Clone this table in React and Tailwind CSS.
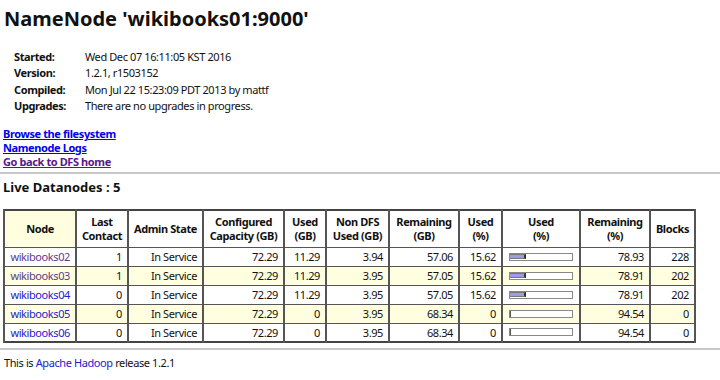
import React from "react";

const rows = [
  { node: "wikibooks02", visited: true, last: 1, cap: "72.29", used: "11.29", nondfs: "3.94", rem: "57.06", usedPct: "15.62", pct: 15.62, remPct: "78.93", blocks: 228 },
  { node: "wikibooks03", visited: true, last: 1, cap: "72.29", used: "11.29", nondfs: "3.95", rem: "57.05", usedPct: "15.62", pct: 15.62, remPct: "78.91", blocks: 202 },
  { node: "wikibooks04", visited: false, last: 0, cap: "72.29", used: "11.29", nondfs: "3.95", rem: "57.05", usedPct: "15.62", pct: 15.62, remPct: "78.91", blocks: 202 },
  { node: "wikibooks05", visited: false, last: 0, cap: "72.29", used: "0", nondfs: "3.95", rem: "68.34", usedPct: "0", pct: 0, remPct: "94.54", blocks: 0 },
  { node: "wikibooks06", visited: false, last: 0, cap: "72.29", used: "0", nondfs: "3.95", rem: "68.34", usedPct: "0", pct: 0, remPct: "94.54", blocks: 0 },
];

const info = [
  ["Started:", "Wed Dec 07 16:11:05 KST 2016"],
  ["Version:", "1.2.1, r1503152"],
  ["Compiled:", "Mon Jul 22 15:23:09 PDT 2013 by mattf"],
  ["Upgrades:", "There are no upgrades in progress."],
];

const th = "border-x-2 border-y border-[#555] font-bold text-center align-middle leading-[13.5px] px-[2px] whitespace-nowrap";
const td = "border-x-2 border-y border-[#555] text-right px-[5px] h-[19px] leading-[17px]";

// the bar image in the old Hadoop UI: blue used part, white remainder
function UsageBar({ pct }) {
  const w = Math.round(pct);
  return (
    <div className="mx-auto flex h-[8px] w-[64px] items-center border border-[#888] bg-white">
      {w > 0 && <div className="h-[5px] bg-[#9c9cec] border-y border-[#777] border-r-2 border-r-[#333]" style={{ width: w }} />}
      {w === 0 && <div className="h-[6px] w-[1px] bg-[#555]" />}
    </div>
  );
}

export default function App() {
  return (
    <div className="w-[720px] h-[380px] overflow-hidden bg-white text-[#111] font-['Noto_Sans',sans-serif] text-[11px] tracking-[-0.4px]">
      <h1 className="pl-[4px] pt-[6px] text-[20px] font-bold leading-[26px] tracking-normal">NameNode 'wikibooks01:9000'</h1>

      <table className="ml-[10px] mt-[17px] border-separate border-spacing-x-[4px]">
        <tbody>
          {info.map(([k, v]) => (
            <tr key={k}>
              <td className="font-bold w-[67px] leading-[16.3px]">{k}</td>
              <td className="leading-[16.3px]">{v}</td>
            </tr>
          ))}
        </tbody>
      </table>

      <div className="mt-[13px] pl-[3px] flex flex-col font-bold leading-[14px]">
        <a href="#" className="underline text-[#0000ee] w-fit">Browse the filesystem</a>
        <a href="#" className="underline text-[#0000ee] w-fit">Namenode Logs</a>
        <a href="#" className="underline text-[#551a8b] w-fit">Go back to DFS home</a>
      </div>

      <hr className="mt-[3px] border-t-2 border-[#c8c8c8]" />

      <h3 className="pl-[3px] mt-[5px] text-[13px] font-bold leading-[16px] tracking-normal">Live Datanodes : 5</h3>

      <table className="ml-[3px] mt-[14px] table-fixed border-collapse border-2 border-[#444] w-[691px]">
        <colgroup>
          <col className="w-[72px]" />
          <col className="w-[52px]" />
          <col className="w-[75px]" />
          <col className="w-[81px]" />
          <col className="w-[42px]" />
          <col className="w-[63px]" />
          <col className="w-[70px]" />
          <col className="w-[43px]" />
          <col className="w-[78px]" />
          <col className="w-[70px]" />
          <col className="w-[45px]" />
        </colgroup>
        <thead>
          <tr className="h-[37px]">
            <th className={th + " bg-[#ffffe0]"}>Node</th>
            <th className={th}>Last<br />Contact</th>
            <th className={th}>Admin State</th>
            <th className={th}>Configured<br />Capacity (GB)</th>
            <th className={th}>Used<br />(GB)</th>
            <th className={th}>Non DFS<br />Used (GB)</th>
            <th className={th}>Remaining<br />(GB)</th>
            <th className={th}>Used<br />(%)</th>
            <th className={th}>Used<br />(%)</th>
            <th className={th}>Remaining<br />(%)</th>
            <th className={th}>Blocks</th>
          </tr>
        </thead>
        <tbody>
          {rows.map((r, i) => (
            <tr key={r.node} className={i % 2 === 1 ? "bg-[#ffffe0]" : "bg-white"}>
              <td className={td + " text-left"}>
                <a href="#" className={r.visited ? "text-[#5b3b8c]" : "text-[#2222cc]"}>{r.node}</a>
              </td>
              <td className={td}>{r.last}</td>
              <td className={td}>In Service</td>
              <td className={td}>{r.cap}</td>
              <td className={td}>{r.used}</td>
              <td className={td}>{r.nondfs}</td>
              <td className={td}>{r.rem}</td>
              <td className={td}>{r.usedPct}</td>
              <td className={td + " text-center"}><UsageBar pct={r.pct} /></td>
              <td className={td}>{r.remPct}</td>
              <td className={td}>{r.blocks}</td>
            </tr>
          ))}
        </tbody>
      </table>

      <hr className="mt-[5px] border-t-2 border-[#c8c8c8]" />

      <p className="pl-[4px] mt-[5px] leading-[16px]">
        This is <a href="#" className="text-[#2222cc]">Apache Hadoop</a> release 1.2.1
      </p>
    </div>
  );
}
